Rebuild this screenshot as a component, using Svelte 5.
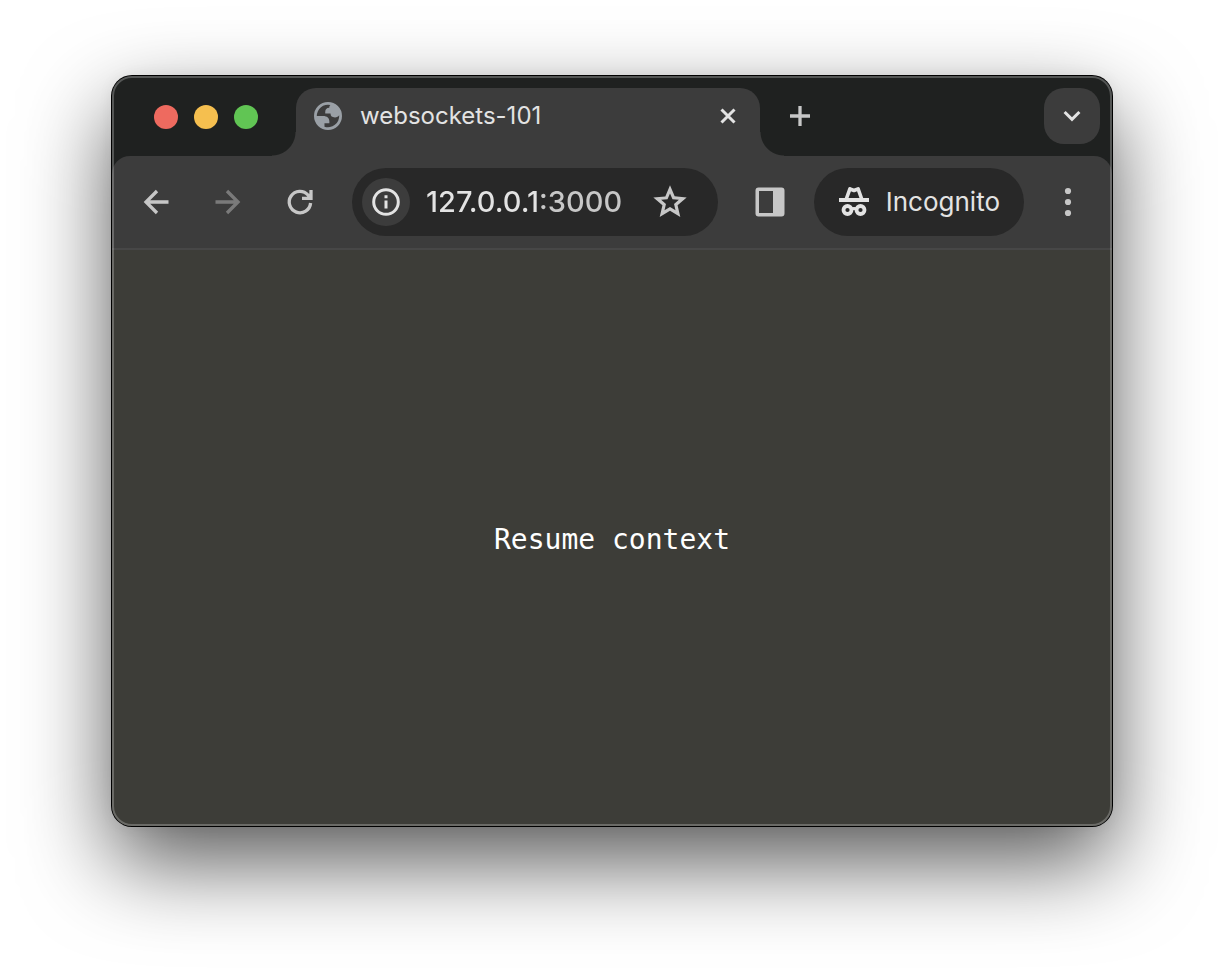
<script>
  let url = $state('127.0.0.1:3000');
</script>

<main class="desktop">
  <section class="window" aria-label="Browser window">
    <header class="strip">
      <div class="lights">
        <button class="light close" aria-label="Close window"></button>
        <button class="light minimize" aria-label="Minimize window"></button>
        <button class="light zoom" aria-label="Zoom window"></button>
      </div>
      <div class="tab">
        <svg class="favicon" viewBox="2 2 20 20" width="28" height="28" aria-hidden="true">
          <path
            fill-rule="evenodd"
            d="M12 2a10 10 0 1 0 0 20 10 10 0 0 0 0-20zM4 12h4.4c3.407.022 4.922 1.73 4.543 5.127H9.488v2.47a8.004 8.004 0 0 0 10.498-8.08C19.327 12.509 18.332 13 17 13c-2.137 0-3.206-.916-3.206-2.75h-3.748c-.274-2.728.683-4.092 2.87-4.092 0-.975.327-1.597.811-1.97A8.004 8.004 0 0 0 4 12z"
          />
        </svg>
        <span class="title">websockets-101</span>
        <button class="tab-close" aria-label="Close tab">
          <svg class="bright" viewBox="0 0 16 16" width="16" height="16"><path d="M1.5 1.5l13 13M14.5 1.5l-13 13" /></svg>
        </button>
      </div>
      <button class="icon new-tab" aria-label="New tab">
        <svg viewBox="0 0 20 20" width="20" height="20"><path d="M10 0v20M0 10h20" /></svg>
      </button>
      <button class="icon search-tabs" aria-label="Search tabs">
        <svg class="bright" viewBox="0 0 18 12" width="18" height="12"><path d="M1.6 2L9 9.4 16.4 2" /></svg>
      </button>
    </header>

    <nav class="toolbar">
      <div class="history">
        <button class="icon" aria-label="Back">
          <svg viewBox="0 0 26 26" width="26" height="26"><path d="M25.5 13H3M14 2L3 13l11 11" /></svg>
        </button>
        <button class="icon" aria-label="Forward" disabled>
          <svg viewBox="0 0 26 26" width="26" height="26"><path d="M.5 13H23M12 2l11 11-11 11" /></svg>
        </button>
        <button class="icon" aria-label="Reload">
          <svg viewBox="0 0 28 28" width="28" height="28"><path d="M24.6 15A10.7 10.7 0 1 1 22 7l3 3M25 2v8.3h-9" /></svg>
        </button>
      </div>
      <div class="omnibox">
        <button class="site-info" aria-label="View site information">
          <svg class="bright" viewBox="0 0 28 28" width="28" height="28">
            <circle cx="14" cy="14" r="12.3" />
            <path d="M14 12.5v8M14 7.2v3" />
          </svg>
        </button>
        <input class="address" aria-label="Address" bind:value={url} spellcheck="false" />
        <button class="bookmark" aria-label="Bookmark this page">
          <svg class="solid" viewBox="0 0 24 24" width="40" height="40">
            <path
              d="M22 9.24l-7.19-.62L12 2 9.19 8.63 2 9.24l5.46 4.73L5.82 21 12 17.27 18.18 21l-1.63-7.03L22 9.24zM12 15l-3.3 1.95.88-3.75-2.9-2.5 3.82-.33L12 6.85l1.5 3.52 3.82.33-2.9 2.5.88 3.75L12 15z"
            />
          </svg>
        </button>
      </div>
      <div class="actions">
        <button class="icon" aria-label="Side panel">
          <svg class="solid" viewBox="0 0 30 30" width="30" height="30">
            <path fill-rule="evenodd" d="M3.5.5h23a3 3 0 0 1 3 3v23a3 3 0 0 1-3 3h-23a3 3 0 0 1-3-3v-23a3 3 0 0 1 3-3zM4 4v22h14V4z" />
          </svg>
        </button>
        <button class="profile">
          <svg class="bright" viewBox="0 0 32 32" width="32" height="32" aria-hidden="true">
            <path class="hat" d="M8.3 13L11.9 2.8 16 4.5l4.1-1.7L23.7 13" />
            <path class="brim" d="M1 14h30" />
            <circle class="lens" cx="9.5" cy="24" r="4" />
            <circle class="lens" cx="22.5" cy="24" r="4" />
            <path class="bridge" d="M13 23.5q3-1.8 6 0" />
          </svg>
          Incognito
        </button>
        <button class="icon" aria-label="Menu">
          <svg class="solid" viewBox="0 0 8 30" width="8" height="30">
            <circle cx="4" cy="4" r="3.1" /><circle cx="4" cy="15" r="3.1" /><circle cx="4" cy="26" r="3.1" />
          </svg>
        </button>
      </div>
    </nav>

    <div class="page">
      <button class="resume">Resume context</button>
    </div>
  </section>
</main>

<style>
  :global(body) {
    margin: 0;
    background: #fff;
  }

  button,
  input {
    margin: 0;
    padding: 0;
    border: 0;
    background: none;
    color: inherit;
    font: inherit;
    min-width: 0;
  }

  svg {
    display: block;
    flex: none;
    fill: none;
    stroke: #c7c7c7;
    stroke-width: 3.3;
  }

  svg.bright {
    stroke: #e3e3e3;
    stroke-width: 3;
  }

  svg.solid {
    fill: #c7c7c7;
    stroke: none;
  }

  .desktop {
    box-sizing: border-box;
    display: flex;
    min-height: 100vh;
    padding: 76px 112px 148px;
    overflow: hidden;
    font-family: Inter, 'Open Sans', sans-serif;
    color: #e3e3e3;
  }

  .window {
    position: relative;
    flex: 1;
    min-width: 0;
    display: flex;
    flex-direction: column;
    border-radius: 20px;
    background: #1f2120;
    box-shadow:
      0 0 0 1px #000,
      0 36px 88px rgba(0, 0, 0, 0.66),
      0 0 16px rgba(0, 0, 0, 0.06);
  }

  /* Light rim drawn over the window's content */
  .window::after {
    content: '';
    position: absolute;
    inset: 0;
    border: 2px solid rgba(255, 255, 255, 0.24);
    border-radius: inherit;
    pointer-events: none;
  }

  .strip {
    display: flex;
    align-items: flex-start;
    padding: 12px 12px 0 42px;
  }

  .lights {
    display: flex;
    align-items: center;
    gap: 16px;
    height: 58px;
    margin-right: 38px;
  }

  .light {
    width: 24px;
    height: 24px;
    border-radius: 50%;
  }

  .close {
    background: #ee6a5f;
  }

  .minimize {
    background: #f5bf4f;
  }

  .zoom {
    background: #61c554;
  }

  .tab {
    position: relative;
    box-sizing: border-box;
    flex: 0 1 464px;
    min-width: 0;
    height: 68px;
    padding: 0 16px 12px 18px;
    display: flex;
    align-items: center;
    border-radius: 20px 20px 0 0;
    background: #3c3c3c;
  }

  /* Flared feet joining the tab to the toolbar */
  .tab::before,
  .tab::after {
    content: '';
    position: absolute;
    bottom: 0;
    width: 24px;
    height: 24px;
  }

  .tab::before {
    right: 100%;
    background: radial-gradient(circle at 0 0, transparent 23px, #3c3c3c 24px);
  }

  .tab::after {
    left: 100%;
    background: radial-gradient(circle at 100% 0, transparent 23px, #3c3c3c 24px);
  }

  .favicon {
    fill: #9aa0a6;
    stroke: none;
    margin-right: 18px;
  }

  .title {
    flex: 1;
    min-width: 0;
    overflow: hidden;
    white-space: nowrap;
    font-size: 24px;
    line-height: 32px;
  }

  .tab-close {
    display: grid;
    place-items: center;
    width: 32px;
    height: 32px;
  }

  .icon {
    display: grid;
    place-items: center;
    flex: none;
    width: 56px;
    height: 56px;
  }

  .icon:disabled {
    opacity: 0.45;
  }

  .new-tab {
    margin-left: 12px;
  }

  .search-tabs {
    margin-left: auto;
    border-radius: 20px;
    background: #3c3c3c;
  }

  .toolbar {
    display: flex;
    align-items: center;
    gap: 24px;
    padding: 12px 16px;
    border-bottom: 2px solid #474747;
    border-radius: 18px 18px 0 0;
    background: #3c3c3c;
  }

  .history,
  .actions {
    display: flex;
    align-items: center;
    gap: 16px;
  }

  .omnibox {
    box-sizing: border-box;
    flex: 1;
    min-width: 0;
    height: 68px;
    padding: 0 28px 0 10px;
    display: flex;
    align-items: center;
    border-radius: 34px;
    background: #282828;
  }

  .site-info {
    display: grid;
    place-items: center;
    flex: none;
    width: 48px;
    height: 48px;
    margin-right: 16px;
    border-radius: 50%;
    background: #3c3c3c;
  }

  /* The host is bright and the port is dimmed */
  .address {
    flex: 1;
    height: 40px;
    font-size: 29px;
    font-weight: 500;
    line-height: 40px;
    color: transparent;
    caret-color: #e3e3e3;
    background: linear-gradient(90deg, #e3e3e3 116px, #c7c7c7 116px);
    -webkit-background-clip: text;
    background-clip: text;
    outline: none;
  }

  .profile {
    display: flex;
    align-items: center;
    gap: 16px;
    height: 68px;
    padding: 0 24px;
    border-radius: 34px;
    background: #282828;
    font-size: 26px;
    line-height: 32px;
  }

  .hat {
    stroke-linejoin: round;
    stroke-width: 3.6;
  }

  .brim {
    stroke-width: 4;
  }

  .lens {
    stroke-width: 3.8;
  }

  .page {
    flex: 1;
    display: grid;
    place-items: center;
    padding-top: 4px;
    border-radius: 0 0 20px 20px;
    background: #3d3d38;
  }

  .resume {
    color: #fff;
    font-family: 'DejaVu Sans Mono', monospace;
    font-size: 28px;
    line-height: 40px;
  }
</style>
